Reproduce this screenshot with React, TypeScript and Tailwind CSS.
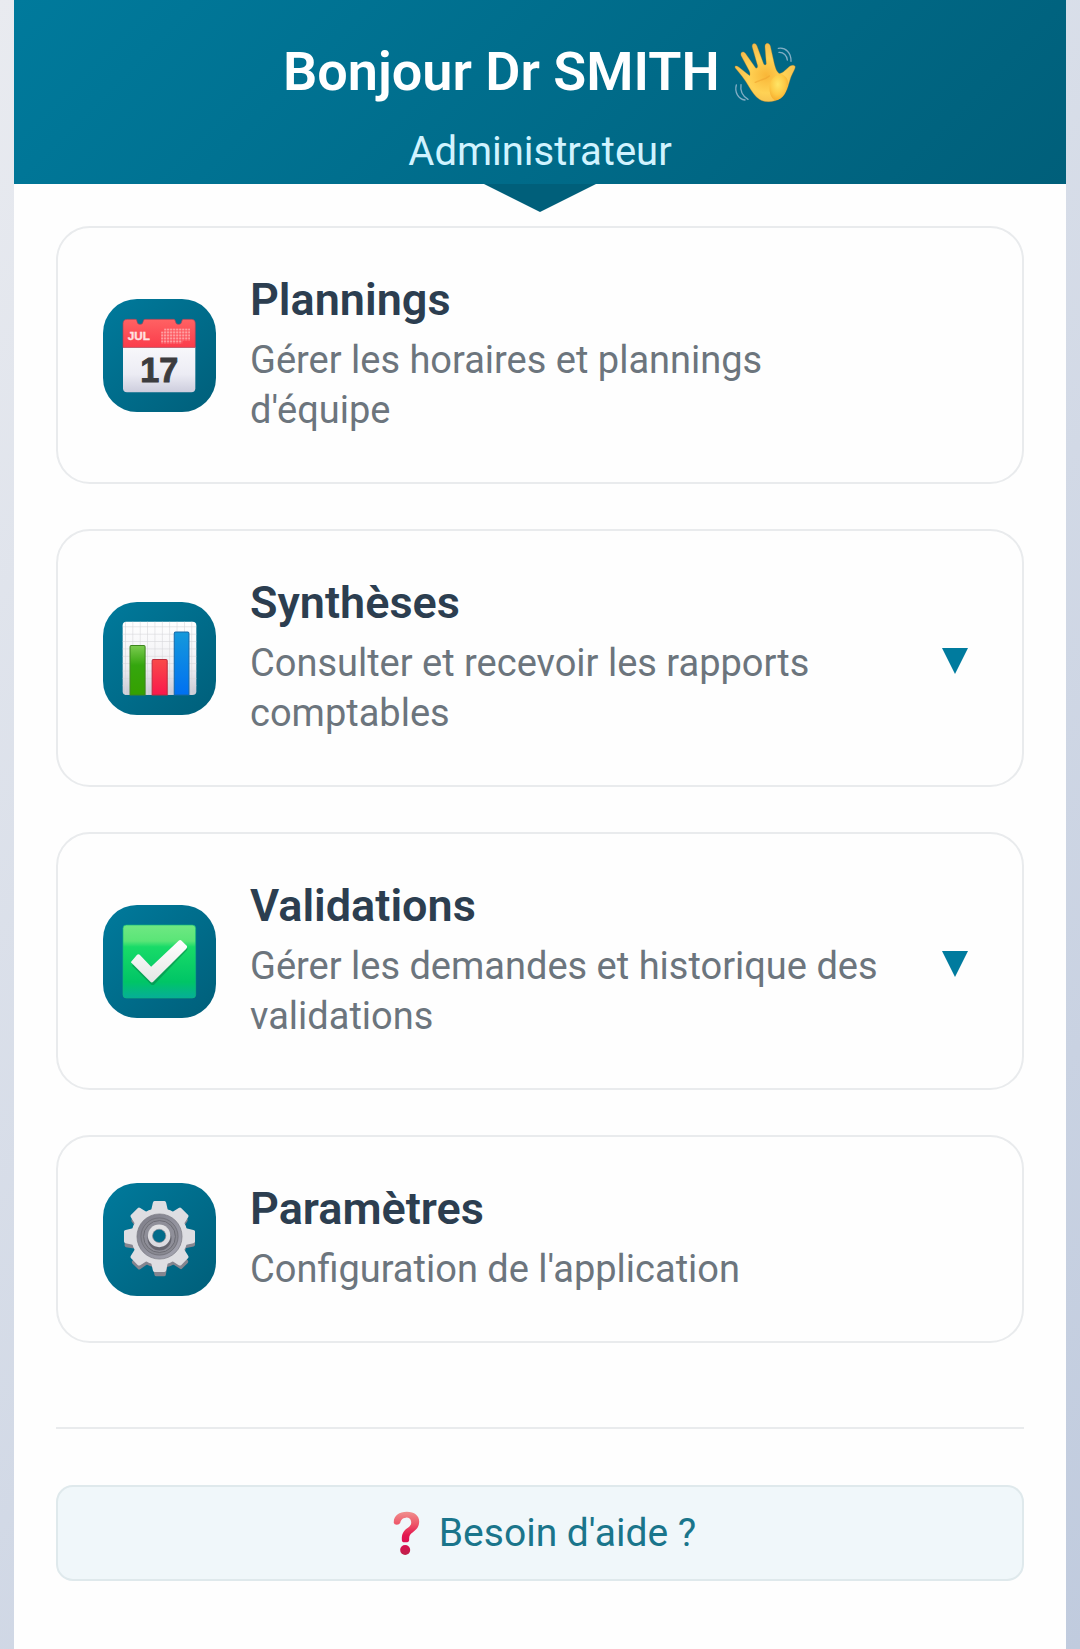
import { useState } from "react";

type MenuItem = {
  id: string;
  title: string;
  description: string;
  icon: React.FC;
  expandable?: boolean;
};

const WavingHand: React.FC = () => (
  <svg
    viewBox="40 34 192 186"
    className="mb-2 inline-block h-16 w-16 align-middle"
    aria-hidden="true"
  >
    <defs>
      <radialGradient id="hand" cx="0.52" cy="0.55" r="0.6">
        <stop offset="0" stopColor="#f9b738" />
        <stop offset="0.5" stopColor="#ffd255" />
        <stop offset="1" stopColor="#f2b84c" />
      </radialGradient>
      <radialGradient id="palm" cx="0.45" cy="0.4" r="0.65">
        <stop offset="0" stopColor="#ffe566" />
        <stop offset="0.6" stopColor="#fdc945" />
        <stop offset="1" stopColor="#f5a92a" />
      </radialGradient>
    </defs>
    <path
      d="M47 115C42 107 52 108 58 113L90 138C92 134 91 129 89 124L65 79C60 68 70 62 77 71L108 115C111 117 115 113 114 108L98 53C95 41 107 37 112 49L132 103C134 107 139 107 140 102L136 52C135 39 148 37 152 49L164 103C168 117 171 127 179 132C187 131 195 123 202 117C211 107 222 104 226 110C229 115 218 130 212 147C205 169 200 194 183 206C164 218 136 220 119 209C107 201 96 185 88 171C76 150 61 132 47 115Z"
      fill="url(#hand)"
      stroke="#c98a25"
      strokeWidth="1"
    />
    <path
      d="M150 170C151 151 164 139 179 132C193 133 208 147 205 163C199 187 190 209 166 212C154 205 148 189 150 170Z"
      fill="url(#palm)"
    />
    <path
      d="M107 158C121 151 139 149 149 139"
      fill="none"
      stroke="#efa42f"
      strokeWidth="4"
      strokeLinecap="round"
      opacity="0.6"
    />
    <g fill="none" stroke="#82aec5" strokeWidth="4" strokeLinecap="round">
      <path d="M176 56C198 52 215 70 214 95" />
      <path d="M178 68C192 67 202 78 203 91" />
      <path d="M50 166C44 187 56 209 76 211" />
      <path d="M64 165C61 184 68 199 85 209" />
    </g>
  </svg>
);

const CalendarIcon: React.FC = () => (
  <svg viewBox="100 98 224 224" className="size-[75px]" aria-hidden="true">
    <defs>
      <linearGradient id="page" x1="0" y1="0" x2="0" y2="1">
        <stop offset="0" stopColor="#f8f8fb" />
        <stop offset="0.6" stopColor="#ececf4" />
        <stop offset="1" stopColor="#cdcddd" />
      </linearGradient>
      <linearGradient id="strip" x1="0" y1="0" x2="0" y2="1">
        <stop offset="0" stopColor="#ff6263" />
        <stop offset="1" stopColor="#fb3c4b" />
      </linearGradient>
      <pattern id="days" x="217" y="129" width="9" height="9" patternUnits="userSpaceOnUse">
        <rect width="6" height="6" fill="#ffa3a5" />
      </pattern>
    </defs>
    <path d="M103 184H319V308Q319 320 307 320H115Q103 320 103 308Z" fill="url(#page)" />
    <path
      d="M103 186V115Q103 102 116 102H140Q145 102 145 109Q146 117 154 117Q162 117 163 109Q164 102 169 102H254Q259 102 260 109Q261 117 269 117Q277 117 278 109Q279 102 284 102H307Q319 102 319 115V186Z"
      fill="url(#strip)"
      stroke="#a64358"
      strokeWidth="2"
    />
    <path d="M226 129H303V165H280V174H217V138H226Z" fill="url(#days)" />
    <text
      x="117"
      y="165"
      className="fill-[#ffe2e2] stroke-[#ffe2e2] stroke-1 font-['Liberation_Sans',sans-serif] text-[35px] font-bold"
    >
      JUL
    </text>
    <text
      x="211"
      y="290"
      textAnchor="middle"
      className="fill-[#3c3c3f] stroke-[#3c3c3f] stroke-3 font-['Liberation_Sans',sans-serif] text-[102px] font-bold"
    >
      17
    </text>
  </svg>
);

const ChartIcon: React.FC = () => (
  <svg viewBox="98 91 224 224" className="size-[75px]" aria-hidden="true">
    <defs>
      <linearGradient id="paper" x1="0" y1="0" x2="0" y2="1">
        <stop offset="0" stopColor="#ffffff" />
        <stop offset="0.6" stopColor="#f0f0f4" />
        <stop offset="1" stopColor="#c8c8d4" />
      </linearGradient>
      <linearGradient id="green" x1="0" y1="0" x2="0" y2="1">
        <stop offset="0" stopColor="#7ccb50" />
        <stop offset="0.4" stopColor="#35a60e" />
        <stop offset="1" stopColor="#35a000" />
      </linearGradient>
      <linearGradient id="red" x1="0" y1="0" x2="0" y2="1">
        <stop offset="0" stopColor="#f94a4a" />
        <stop offset="1" stopColor="#fa174c" />
      </linearGradient>
      <linearGradient id="blue" x1="0" y1="0" x2="0" y2="1">
        <stop offset="0" stopColor="#1599db" />
        <stop offset="1" stopColor="#0070f2" />
      </linearGradient>
      <pattern id="grid" x="107" y="107" width="22" height="22" patternUnits="userSpaceOnUse">
        <path d="M0 1H22M1 0V22" stroke="#d5d5da" strokeWidth="2" />
      </pattern>
    </defs>
    <rect x="100" y="93" width="220" height="219" rx="11" fill="url(#paper)" />
    <rect x="100" y="93" width="220" height="219" rx="11" fill="url(#grid)" />
    <g strokeWidth="3">
      <path d="M122 312V168Q122 164 126 164H163Q167 164 167 168V312Z" fill="url(#green)" stroke="#3d851e" />
      <path d="M188 312V210Q188 206 192 206H229Q233 206 233 210V312Z" fill="url(#red)" stroke="#bb2c3e" />
      <path d="M254 312V128Q254 124 258 124H294Q298 124 298 128V312Z" fill="url(#blue)" stroke="#1468a8" />
    </g>
  </svg>
);

const CheckIcon: React.FC = () => (
  <svg viewBox="99 99 224 224" className="size-[75px]" aria-hidden="true">
    <defs>
      <linearGradient id="box" x1="0" y1="0" x2="0" y2="1">
        <stop offset="0" stopColor="#6fe883" />
        <stop offset="0.22" stopColor="#5ae577" />
        <stop offset="0.3" stopColor="#18db68" />
        <stop offset="0.78" stopColor="#00c566" />
        <stop offset="1" stopColor="#06ae98" />
      </linearGradient>
      <linearGradient id="tick" x1="0" y1="0" x2="0" y2="1">
        <stop offset="0" stopColor="#ffffff" />
        <stop offset="1" stopColor="#e4e7e5" />
      </linearGradient>
    </defs>
    <rect x="102" y="102" width="217" height="218" rx="10" fill="url(#box)" stroke="#10b77c" strokeWidth="2" />
    <path
      d="M129 216L144 195Q148 190 152 194L186 231L269 150Q274 146 277 150L292 167Q294 171 290 174L194 275Q188 280 183 275L129 221Q126 219 129 216Z"
      transform="translate(2 4)"
      fill="#087c43"
      opacity="0.5"
    />
    <path
      d="M127 211L144 191Q148 187 152 191L186 227L269 148Q273 145 277 149L293 165Q295 169 291 173L193 271Q188 276 183 271L127 215Q124 213 127 211Z"
      fill="url(#tick)"
    />
  </svg>
);

const teeth = [0, 45, 90, 135, 180, 225, 270, 315];

const GearIcon: React.FC = () => (
  <svg viewBox="98 92 224 232" className="h-[77px] w-[75px]" aria-hidden="true">
    <defs>
      <linearGradient id="steel" x1="0" y1="0" x2="0" y2="1">
        <stop offset="0" stopColor="#e3e3e5" />
        <stop offset="1" stopColor="#d9d9df" />
      </linearGradient>
      <linearGradient id="ring" x1="0" y1="0" x2="1" y2="1">
        <stop offset="0" stopColor="#7c7c86" />
        <stop offset="1" stopColor="#a7a7b3" />
      </linearGradient>
    </defs>
    <g fill="#85858f">
      <circle cx="212" cy="213" r="81" />
      {teeth.map((angle) => (
        <path
          key={angle}
          d="M188 140L193 111Q194 107 198 107H222Q226 107 227 111L233 140Z"
          transform={`rotate(${angle} 211 213)`}
        />
      ))}
    </g>
    <circle cx="210" cy="199" r="67" fill="none" stroke="#dedee2" strokeWidth="36" />
    <g fill="#dedee2">
      {teeth.map((angle) => (
        <path
          key={angle}
          d="M183 128L190 97Q191 92 195 92H225Q229 92 230 97L237 128Z"
          transform={`rotate(${angle} 210 199)`}
        />
      ))}
    </g>
    <circle cx="210" cy="199" r="68" fill="url(#ring)" stroke="#777780" strokeWidth="2" />
    <circle cx="210" cy="199" r="56" fill="#898992" stroke="#65656e" strokeWidth="2" />
    <circle cx="210" cy="199" r="48" fill="#8f8f99" stroke="#6c6c74" strokeWidth="3" />
    <circle cx="210" cy="205" r="36" fill="#666670" />
    <circle cx="209" cy="197" r="34" fill="url(#steel)" />
    <circle cx="209" cy="197" r="20" fill="#006b8a" stroke="#85858e" strokeWidth="2" />
  </svg>
);

const QuestionIcon: React.FC = () => (
  <svg viewBox="64 118 86 138" className="h-[46px] w-[29px]" aria-hidden="true">
    <defs>
      <linearGradient id="ask" gradientUnits="userSpaceOnUse" x1="0" y1="122" x2="0" y2="252">
        <stop offset="0" stopColor="#f0928f" />
        <stop offset="0.3" stopColor="#ee5568" />
        <stop offset="0.55" stopColor="#e3174f" />
        <stop offset="0.75" stopColor="#dc0c53" />
        <stop offset="1" stopColor="#bf2149" />
      </linearGradient>
    </defs>
    <path
      d="M69 157C67 136 84 123 108 123C132 123 146 136 145 154C144 173 132 180 122 188C115 194 115 199 115 208Q115 215 105 215H101Q93 215 93 207C93 190 97 182 109 173C118 166 122 162 121 153C120 143 112 140 105 141C94 142 90 148 88 157Q85 162 78 162Q70 162 69 157Z"
      fill="url(#ask)"
    />
    <circle cx="103" cy="238" r="15" fill="url(#ask)" />
  </svg>
);

const menuItems: MenuItem[] = [
  {
    id: "plannings",
    title: "Plannings",
    description: "Gérer les horaires et plannings d'équipe",
    icon: CalendarIcon,
  },
  {
    id: "syntheses",
    title: "Synthèses",
    description: "Consulter et recevoir les rapports comptables",
    icon: ChartIcon,
    expandable: true,
  },
  {
    id: "validations",
    title: "Validations",
    description: "Gérer les demandes et historique des validations",
    icon: CheckIcon,
    expandable: true,
  },
  {
    id: "parametres",
    title: "Paramètres",
    description: "Configuration de l'application",
    icon: GearIcon,
  },
];

const cardClass =
  "flex w-full items-center gap-[34px] rounded-[34px] border-2 border-[#e9ebed] bg-[#fefefe] p-[45px] text-left";

type CardContentProps = {
  item: MenuItem;
  open: boolean;
};

const CardContent: React.FC<CardContentProps> = ({ item, open }) => {
  const Icon = item.icon;

  return (
    <>
      <span className="flex size-[113px] shrink-0 items-center justify-center rounded-[34px] bg-linear-135 from-[#007a9c] to-[#005f7a]">
        <Icon />
      </span>
      <span className="block min-w-0 flex-1 pb-0.5">
        <span className="mb-2 block text-[45px] leading-[54px] font-semibold text-[#2c3e50]">
          {item.title}
        </span>
        <span className="block text-[38px] leading-[50px] text-[#6c757d]">
          {item.description}
        </span>
      </span>
      <span className="flex w-11 shrink-0 justify-center pt-1.5">
        {item.expandable && (
          <svg
            viewBox="0 0 26 26"
            className={open ? "size-[26px] rotate-180" : "size-[26px]"}
            aria-hidden="true"
          >
            <path d="M0 0H26L13 26Z" fill="#007b9e" />
          </svg>
        )}
      </span>
    </>
  );
};

export default function App() {
  const [openId, setOpenId] = useState<string | null>(null);

  return (
    <div className="min-h-screen bg-linear-135 from-[#e9ebf0] to-[#c0cbde] px-3.5 font-[Roboto,sans-serif]">
      <div className="min-h-screen bg-[#fefefe]">
        <header className="relative bg-linear-135 from-[#007a9c] to-[#005f7a] px-10 pt-10 text-center">
          <h1 className="mb-2 text-[54px] leading-[64px] font-semibold text-white">
            Bonjour Dr SMITH <WavingHand />
          </h1>
          <p className="text-[40px] leading-[64px] text-[#d0f3ff]">Administrateur</p>
          <svg
            viewBox="0 0 112 28"
            className="absolute top-full left-1/2 h-7 w-28 -translate-x-1/2"
            aria-hidden="true"
          >
            <path d="M0 0H112L56 28Z" fill="#005f7a" />
          </svg>
        </header>

        <main className="px-[42px] pt-[42px] pb-[68px]">
          <nav className="space-y-[45px]">
            {menuItems.map((item) =>
              item.expandable ? (
                <button
                  key={item.id}
                  type="button"
                  aria-expanded={openId === item.id}
                  onClick={() => setOpenId(openId === item.id ? null : item.id)}
                  className={cardClass}
                >
                  <CardContent item={item} open={openId === item.id} />
                </button>
              ) : (
                <a key={item.id} href={`#${item.id}`} className={cardClass}>
                  <CardContent item={item} open={false} />
                </a>
              )
            )}
          </nav>

          <footer className="mt-[84px] border-t-2 border-[#e9ebed] pt-14">
            <button
              type="button"
              className="flex h-24 w-full items-center justify-center gap-[18px] rounded-[17px] border-2 border-[#dfe9ec] bg-[#f0f7fa] pl-2 text-[39px] text-[#1a758b]"
            >
              <QuestionIcon />
              Besoin d'aide ?
            </button>
          </footer>
        </main>
      </div>
    </div>
  );
}
